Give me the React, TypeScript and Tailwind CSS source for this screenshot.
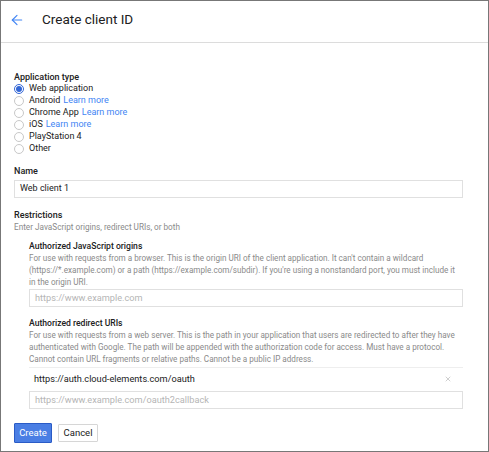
import React from "react";
import { ArrowLeft, X } from "lucide-react";

const font = { fontFamily: "Roboto, 'Liberation Sans', sans-serif" };

function Radio({ checked }: { checked?: boolean }) {
  return (
    <span
      className={
        "inline-flex items-center justify-center w-[10px] h-[10px] rounded-full border mr-[5px] shrink-0 " +
        (checked ? "border-[#3367d6]" : "border-[#c8c8c8]")
      }
    >
      {checked && <span className="w-[6px] h-[6px] rounded-full bg-[#3367d6]" />}
    </span>
  );
}

export default function App() {
  const options: { label: string; link?: boolean; checked?: boolean }[] = [
    { label: "Web application", checked: true },
    { label: "Android", link: true },
    { label: "Chrome App", link: true },
    { label: "iOS", link: true },
    { label: "PlayStation 4" },
    { label: "Other" },
  ];
  return (
    <div style={font} className="w-[489px] h-[452px] border border-[#777] bg-white text-[#212121] overflow-hidden">
      <div className="h-[42px] border-b border-[#dcdcdc] flex items-start pt-[11px]">
        <ArrowLeft className="ml-[8px] w-[16px] h-[16px] text-[#4285f4]" strokeWidth={1.75} />
        <div className="ml-[17px] text-[13.5px] leading-[14px] text-[#212121]">Create client ID</div>
      </div>
      <div className="pl-[13px] pr-[25px] pt-[28px]">
        <div className="text-[9px] font-medium leading-[12px]">Application type</div>
        <div className="flex flex-col">
          {options.map((o) => (
            <div key={o.label} className="flex items-center h-[12px] text-[9px]">
              <Radio checked={o.checked} />
              <span>{o.label}</span>
              {o.link && <span className="ml-[3px] text-[#4285f4]">Learn more</span>}
            </div>
          ))}
        </div>
        <div className="mt-[10px] text-[9px] font-medium leading-[12px]">Name</div>
        <div className="mt-[3px] h-[18px] border border-[#e0e0e0] flex items-center pl-[5px] text-[9px]">
          Web client 1
        </div>
        <div className="mt-[11px] text-[9px] font-medium leading-[12px]">Restrictions</div>
        <div className="text-[8.2px] text-[#8a8a8a] leading-[12px]">Enter JavaScript origins, redirect URIs, or both</div>
        <div className="pl-[15px] mt-[7px]">
          <div className="text-[8.6px] font-medium leading-[12px]">Authorized JavaScript origins</div>
          <div className="text-[8.15px] text-[#8a8a8a] leading-[12px]">
            For use with requests from a browser. This is the origin URI of the client application. It can't contain a wildcard (https://*.example.com) or a path (https://example.com/subdir). If you're using a nonstandard port, you must include it in the origin URI.
          </div>
          <div className="mt-[1px] h-[18px] border border-[#e0e0e0] flex items-center pl-[5px] text-[9.2px] text-[#b5b5b5]">
            https://www.example.com
          </div>
          <div className="mt-[10px] text-[8.6px] font-medium leading-[12px]">Authorized redirect URIs</div>
          <div className="text-[8.15px] text-[#8a8a8a] leading-[12px]">
            For use with requests from a web server. This is the path in your application that users are redirected to after they have authenticated with Google. The path will be appended with the authorization code for access. Must have a protocol. Cannot contain URL fragments or relative paths. Cannot be a public IP address.
          </div>
          <div className="mt-[2px] border-t border-[#eeeeee] h-[23px] flex items-center justify-between pl-[5px] pr-[11px]">
            <span className="text-[9.2px] text-[#212121]">https://auth.cloud-elements.com/oauth</span>
            <X className="w-[8px] h-[8px] text-[#9e9e9e]" strokeWidth={1.5} />
          </div>
          <div className="mt-[1px] h-[18px] border border-[#e0e0e0] flex items-center pl-[5px] text-[9.2px] text-[#b5b5b5]">
            https://www.example.com/oauth2callback
          </div>
        </div>
        <div className="mt-[14px] flex items-center gap-[6px]">
          <div className="h-[20px] w-[38px] flex items-center justify-center bg-[#4a7ee4] border border-[#2a5bc6] text-white text-[9.5px] rounded-[1px]">
            Create
          </div>
          <div className="h-[18px] w-[40px] flex items-center justify-center bg-white border border-[#d6d6d6] text-[#212121] text-[9.5px] rounded-[1px]">
            Cancel
          </div>
        </div>
      </div>
    </div>
  );
}
